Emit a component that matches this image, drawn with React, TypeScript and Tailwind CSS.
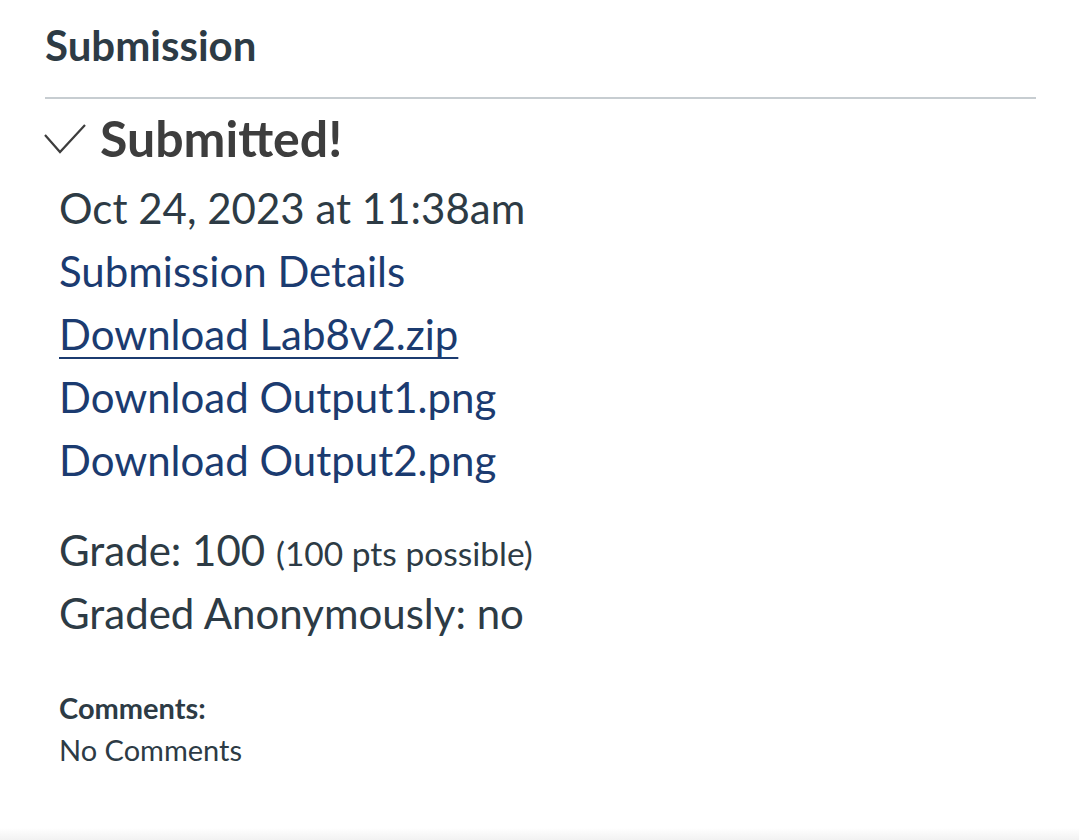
import React from "react";

export default function App() {
  return (
    <div className="flex min-h-[840px] w-[1079px] flex-col bg-white font-['Lato','Noto_Sans',sans-serif] text-[#2d3b45]">
      <div className="pl-[45px] pr-[43px] pt-[21px]">
        <h2 className="text-[42px] font-bold leading-[48px] text-[#2d3b45]">Submission</h2>
        <div className="mt-[28px] h-[2px] bg-[#c7cdd1]" />
        <div className="mt-[10px] flex items-start gap-[13px]">
          <svg width="44" height="31" viewBox="0 0 44 31" className="ml-[-2px] mt-[14px] shrink-0">
            <path d="M2 12 L17 29 L42 2" fill="none" stroke="#3d3d3d" strokeWidth="2.2" />
          </svg>
          <span className="text-[50px] font-bold leading-[58px] text-[#3d3d3d]">Submitted!</span>
        </div>
        <div className="pl-[14px] text-[42px] leading-[63px]">
          <div className="mt-[10px]">Oct 24, 2023 at 11:38am</div>
          <div className="text-[#1b3b70]">Submission Details</div>
          <div className="text-[#1b3b70] underline decoration-[2px] underline-offset-[7px]">Download Lab8v2.zip</div>
          <div className="text-[#1b3b70]">Download Output1.png</div>
          <div className="text-[#1b3b70]">Download Output2.png</div>
          <div className="mt-[27px]">
            Grade: 100 <span className="text-[33.5px] leading-none">(100 pts possible)</span>
          </div>
          <div>Graded Anonymously: no</div>
          <div className="mt-[42px] text-[29px] font-bold leading-[42px]">Comments:</div>
          <div className="text-[29px] leading-[42px]">No Comments</div>
        </div>
      </div>
      <div className="mt-auto h-[12px] bg-gradient-to-b from-white to-[#f2f2f2]" />
    </div>
  );
}
